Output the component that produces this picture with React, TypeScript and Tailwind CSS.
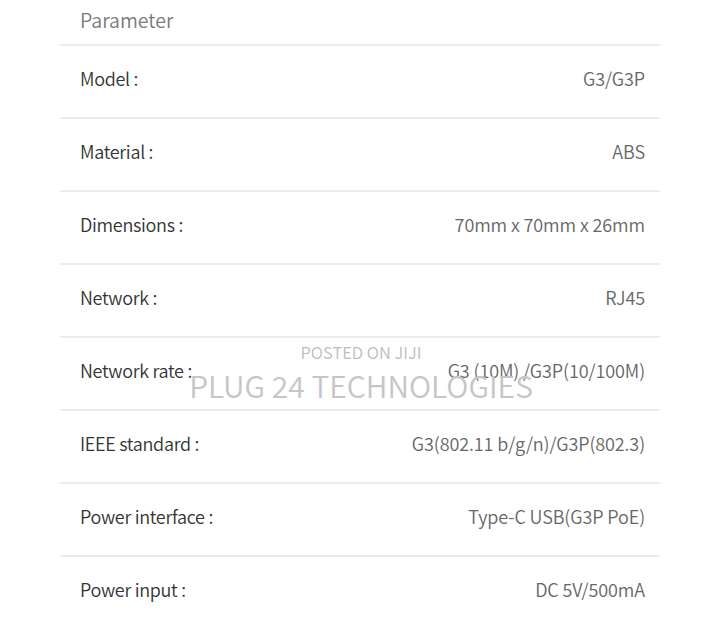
import React from 'react';

const rows: { label: string; value: string }[] = [
    { label: 'Model :', value: 'G3/G3P' },
    { label: 'Material :', value: 'ABS' },
    { label: 'Dimensions :', value: '70mm x 70mm x 26mm' },
    { label: 'Network :', value: 'RJ45' },
    { label: 'Network rate :', value: 'G3 (10M) /G3P(10/100M)' },
    { label: 'IEEE standard :', value: 'G3(802.11 b/g/n)/G3P(802.3)' },
    { label: 'Power interface :', value: 'Type-C USB(G3P PoE)' },
    { label: 'Power input :', value: 'DC 5V/500mA' },
];

export default function App() {
    return (
        <div
            className="relative w-[722px] h-[620px] overflow-hidden bg-white"
            style={{ fontFamily: '"Noto Sans CJK SC", "Noto Sans", sans-serif' }}
        >
            <div className="mx-[60px] w-[600px]">
                {/* Header */}
                <div className="h-[44px] pt-[6px] px-[20px]">
                    <span className="text-[19.5px] font-[350] text-[#7a7a7a] leading-[28px]">Parameter</span>
                </div>

                {rows.map((row, index) => (
                    <div
                        key={index}
                        className="h-[73px] flex items-start justify-between pt-[19px] pl-[20px] pr-[15px] border-t-2 border-[#ececec]"
                    >
                        <span className="text-[18px] leading-[26px] font-[350] text-[#333333] tracking-[-0.3px]">{row.label}</span>
                        <span className="text-[18px] leading-[26px] font-[350] text-[#666666] tracking-[-0.1px]">{row.value}</span>
                    </div>
                ))}
            </div>

            {/* Watermark */}
            <div className="absolute left-0 right-0 top-[340px] flex flex-col items-center pointer-events-none">
                <span className="text-[16.5px] leading-[24px] font-[350] text-[#bdbdbd]">POSTED ON JIJI</span>
                <span className="text-[30px] leading-[38px] font-[350] text-[#c6c6c6] mt-[2px]">PLUG 24 TECHNOLOGIES</span>
            </div>
        </div>
    );
}
